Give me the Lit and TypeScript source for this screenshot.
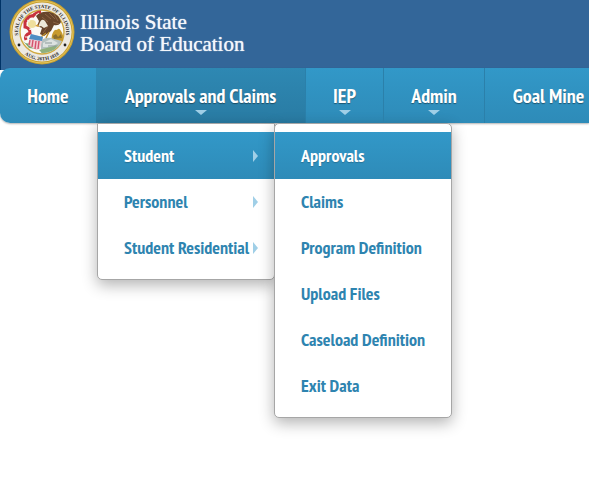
import { LitElement, html, css, svg, nothing } from "lit";
import { customElement } from "lit/decorators.js";
import { classMap } from "lit/directives/class-map.js";

interface MenuEntry {
  label: string;
  size?: string;
  arrow?: boolean;
  open?: boolean;
  children?: MenuEntry[];
}

const MENU: MenuEntry[] = [
  { label: "Home", size: "home" },
  {
    label: "Approvals and Claims",
    size: "wide",
    arrow: true,
    open: true,
    children: [
      {
        label: "Student",
        arrow: true,
        open: true,
        children: [
          { label: "Approvals", open: true },
          { label: "Claims" },
          { label: "Program Definition" },
          { label: "Upload Files" },
          { label: "Caseload Definition" },
          { label: "Exit Data" },
        ],
      },
      { label: "Personnel", arrow: true },
      { label: "Student Residential", arrow: true },
    ],
  },
  { label: "IEP", size: "narrow", arrow: true },
  { label: "Admin", size: "medium", arrow: true },
  { label: "Goal Mine", size: "rest" },
];

@customElement("state-seal")
export class StateSeal extends LitElement {
  static styles = css`
    :host { display: block; width: 66px; height: 66px; }
    svg { display: block; width: 100%; height: 100%; }
    text { font: bold 5px "Liberation Serif", serif; fill: #2c2a28; }
  `;

  render() {
    return svg`
      <svg viewBox="0 1 66 66" role="img" aria-label="Seal of the State of Illinois">
        <defs>
          <path id="top" d="M10.4 41.2 A24 24 0 1 1 55.6 41.2" />
          <path id="bottom" d="M8.8 48 A28.5 28.5 0 0 0 57.2 48" />
        </defs>
        <circle cx="33" cy="33" r="32.5" fill="#c9a02f" />
        <circle cx="33" cy="33" r="31" fill="none" stroke="#e3c55e" stroke-width="1" />
        <circle cx="33" cy="33" r="29.6" fill="#ece9e2" />
        <circle cx="33" cy="33" r="22" fill="#fbfaf4" stroke="#d0aa42" stroke-width="1.4" />
        <text text-anchor="middle"><textPath href="#top" startOffset="50%">SEAL OF THE STATE OF ILLINOIS</textPath></text>
        <text text-anchor="middle"><textPath href="#bottom" startOffset="50%">AUG. 26TH 1818</textPath></text>
        <circle cx="10" cy="46" r="1.4" fill="#222" />
        <circle cx="56" cy="46" r="1.4" fill="#222" />
        <circle cx="23" cy="25" r="4" fill="#efdf9d" />
        <path d="M43 36 Q45 30 48 31 Q50 28 52 32 Q55 36 54 42 L42 43 Z" fill="#c79a2c" />
        <path d="M44 37 l3 -2 2 3 3 -3 1 4 -8 1z" fill="#8c702d" />
        <path d="M32 41 Q39 37 45 40 L53 42 L50 47 Q43 54 32 54 Z" fill="#b3c0bf" />
        <path d="M34 44 L42 40 L49 44 L43 48 L34 48 Z" fill="#dce2e0" />
        <path d="M30 51 L49 46 L46 50 Q40 54 33 54 Z" fill="#8fb07c" />
        <path d="M36 44 h7 M39 47 h8" stroke="#8b9a9b" stroke-width="1" />
        <path d="M14 42 Q19 47 22 42 L27 50 L20 49 Z" fill="#78a774" />
        <path d="M27 17 Q31 12 41 13 Q50 15 52 23 Q50 27 45 26 L42 32 L35 37 L31 35 L33 29 L28 27 L30 22 Z" fill="#68452b" />
        <path d="M36 15 L42 20 M40 14 L46 20 M45 15 L49 22 M33 18 L39 23 M39 27 L34 34 M44 23 L50 25" stroke="#8a6344" stroke-width="1" />
        <path d="M31 23 Q33 19 36 22 L39 27 L35 29 L32 27 L29 28 Z" fill="#eee9d9" />
        <path d="M29 25 l-3 2 4 1z" fill="#d79b31" />
        <path d="M37 34 l-5 4 M40 33 l-3 6" stroke="#b98c2b" stroke-width="1.4" />
        <path d="M32 13 Q27 13 24 17 Q20 16 16 23 L16 28 Q21 29 21 34 Q15 36 17 41" fill="none" stroke="#c8323c" stroke-width="3" />
        <path d="M27 16 l3 -2 M18 21 l3 2 M20 30 l3 1 M16 38 l3 0" stroke="#f3e8e1" stroke-width="1" />
        <path d="M22 35 L34 38 L31 50 L27 51 L19 46 Z" fill="#f0ccd2" />
        <path d="M22 35 L34 38 L33 42 L20 40 Z" fill="#4d8fc4" />
        <path d="M21 41 L20 46 M24 41 L23 48 M27 42 L26 50 M30 42 L29 50" stroke="#d4526c" stroke-width="1.4" />
      </svg>
    `;
  }
}

@customElement("app-root")
export class AppRoot extends LitElement {
  static styles = css`
    :host {
      display: block;
      min-height: 100vh;
      overflow: hidden;
      background: #fff;
      font-family: "PT Sans Narrow", "Liberation Sans Narrow", "Roboto Condensed", "Open Sans Condensed", "Liberation Sans", sans-serif;
      font-weight: 700;
    }
    .banner {
      display: flex;
      align-items: flex-start;
      gap: 5px;
      box-sizing: border-box;
      height: 70px;
      padding-left: 8px;
      border-left: 1px solid #003366;
      background: #336699;
    }
    .title {
      margin: 0;
      padding-top: 11px;
      color: #f4f7fb;
      font: 400 21px/22px "Liberation Serif", serif;
      text-shadow: 0 0 1px #f4f7fb;
    }
    .title span { display: block; }
    ul { margin: 0; padding: 0; list-style: none; }
    a { color: inherit; text-decoration: none; }
    .bar {
      display: flex;
      height: 55px;
      margin-top: -2px;
      border-radius: 10px 0 0 10px;
      background: linear-gradient(#3298c8, #2e8bb8);
      box-shadow: 0 1px 2px rgba(0, 0, 0, 0.3);
      position: relative;
    }
    .top {
      position: relative;
      flex: none;
      box-sizing: border-box;
      border-right: 1px solid #2b80aa;
    }
    .home { width: 96px; border-right: 0; }
    .wide { width: 210px; }
    .narrow { width: 78px; }
    .medium { width: 101px; }
    .rest { flex: 1 0 127px; border-right: 0; }
    .top.open { background: linear-gradient(#2e88b3, #297ba3); }
    .top > a {
      display: flex;
      flex-direction: column;
      align-items: center;
      gap: 2px;
      height: 55px;
      box-sizing: border-box;
      padding-top: 16px;
      color: #fff;
      font-size: 20px;
      line-height: 24px;
      white-space: nowrap;
      text-shadow: 0 1px 1px rgba(0, 0, 0, 0.4);
    }
    .down {
      border: 6px solid transparent;
      border-top: 5px solid #a0cfe7;
      border-bottom: 0;
    }
    .panel {
      position: absolute;
      box-sizing: border-box;
      width: 178px;
      padding: 8px 0 9px;
      border: 1px solid #a6a6a6;
      border-radius: 5px;
      background: #fff;
      box-shadow: 0 5px 15px rgba(0, 0, 0, 0.3);
    }
    .top > .panel { top: 55px; left: 1px; border-radius: 0 0 5px 5px; }
    .entry > .panel { top: -9px; left: 176px; }
    .entry { position: relative; height: 46px; }
    .entry > a {
      display: flex;
      align-items: center;
      justify-content: space-between;
      height: 47px;
      padding: 0 16px 0 26px;
      color: #2e84b0;
      font-size: 18px;
      line-height: 24px;
      white-space: nowrap;
    }
    .entry.open > a {
      color: #fff;
      background: linear-gradient(#3298c8, #2e8bb8);
      text-shadow: 0 1px 1px rgba(0, 0, 0, 0.2);
    }
    .side {
      border: 6px solid transparent;
      border-left: 5px solid #a0cfe7;
      border-right: 0;
    }
  `;

  private panel(entries: MenuEntry[]): unknown {
    return html`<ul class="panel">
      ${entries.map(
        (e) => html`<li class=${classMap({ entry: true, open: !!e.open })}>
          <a href="#"><span>${e.label}</span>${e.arrow ? html`<i class="side"></i>` : nothing}</a>
          ${e.children ? this.panel(e.children) : nothing}
        </li>`
      )}
    </ul>`;
  }

  render() {
    return html`
      <header class="banner">
        <state-seal></state-seal>
        <h1 class="title"><span>Illinois State</span><span>Board of Education</span></h1>
      </header>
      <nav>
        <ul class="bar">
          ${MENU.map(
            (m) => html`<li class=${classMap({ top: true, [m.size ?? "rest"]: true, open: !!m.open })}>
              <a href="#"><span>${m.label}</span>${m.arrow ? html`<i class="down"></i>` : nothing}</a>
              ${m.children ? this.panel(m.children) : nothing}
            </li>`
          )}
        </ul>
      </nav>
    `;
  }
}
